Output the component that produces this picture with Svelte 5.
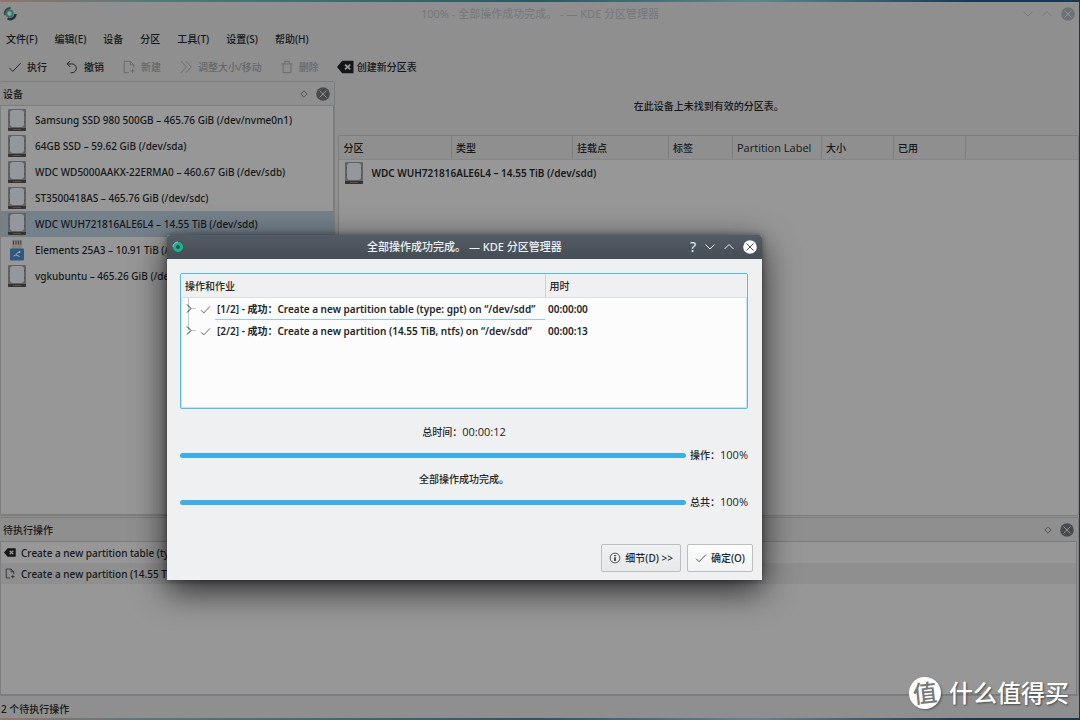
<script>
  const menus = ["文件(F)", "编辑(E)", "设备", "分区", "工具(T)", "设置(S)", "帮助(H)"];

  const devices = [
    { name: "Samsung SSD 980 500GB – 465.76 GiB (/dev/nvme0n1)" },
    { name: "64GB SSD – 59.62 GiB (/dev/sda)" },
    { name: "WDC WD5000AAKX-22ERMA0 – 460.67 GiB (/dev/sdb)" },
    { name: "ST3500418AS – 465.76 GiB (/dev/sdc)" },
    { name: "WDC WUH721816ALE6L4 – 14.55 TiB (/dev/sdd)" },
    { name: "Elements 25A3 – 10.91 TiB (/dev/sde)", usb: true },
    { name: "vgkubuntu – 465.26 GiB (/dev/vgkubuntu)" }
  ];

  const columns = [
    { label: "分区", width: 112 },
    { label: "类型", width: 121 },
    { label: "挂载点", width: 96 },
    { label: "标签", width: 64 },
    { label: "Partition Label", width: 89, latin: true },
    { label: "大小", width: 72 },
    { label: "已用", width: 72 },
    { label: "", width: null }
  ];

  const jobs = [
    { step: "[1/2]", text: "Create a new partition table (type: gpt) on “/dev/sdd”", time: "00:00:00" },
    { step: "[2/2]", text: "Create a new partition (14.55 TiB, ntfs) on “/dev/sdd”", time: "00:00:13" }
  ];

  let selected = $state(4);
  let current = $state(0);
</script>

{#snippet check()}
  <svg class="icon" viewBox="0 0 16 16" aria-hidden="true">
    <path d="M1.5 9 L5.5 13 L14.5 3.5" />
  </svg>
{/snippet}

{#snippet newDoc()}
  <svg class="icon" viewBox="0 0 16 16" aria-hidden="true">
    <path d="M8 14.5 H2.5 V1.5 H9.5 L13.5 5.5 V9 M9.5 1.5 V5.5 H13.5 M12 10 V15 M9.5 12.5 H14.5" />
  </svg>
{/snippet}

{#snippet clearTag()}
  <svg class="icon tag" viewBox="0 0 18 14" aria-hidden="true">
    <path class="solid" d="M0 7 L5.5 0.5 H17.5 V13.5 H5.5 Z" />
    <path class="cross" d="M8.5 4.5 L14 9.5 M14 4.5 L8.5 9.5" />
  </svg>
{/snippet}

{#snippet disk()}
  <svg class="disk" viewBox="0 0 18 22" aria-hidden="true">
    <rect width="18" height="22" rx="1" fill="#606265" />
    <rect x="2" y="1" width="14" height="17" rx="3" fill="#94979b" />
    <path d="M1 6 h1 M16 6 h1 M1 13 h1 M16 13 h1" stroke="#444" />
    <path d="M0 19 H18 V21 a1 1 0 0 1 -1 1 H1 a1 1 0 0 1 -1 -1 Z" fill="#34332f" />
    <path d="M5 20.5 H13" stroke="#5d5040" />
  </svg>
{/snippet}

{#snippet usb()}
  <svg class="disk" viewBox="0 0 18 22" aria-hidden="true">
    <rect x="4" y="1" width="10" height="9" fill="#88857f" />
    <path d="M5.5 1.5 v4 M8 1.5 v4 M10.5 1.5 v4 M12.8 1.5 v4" stroke="#403d36" />
    <rect x="2" y="9.5" width="14" height="12" rx="1" fill="#31597f" />
    <path d="M5.5 17 C9 17 8 13 11.5 13 M8 16 L11.5 17.5" stroke="#9db0c0" fill="none" />
    <circle cx="11.5" cy="13" r="1" fill="#9db0c0" />
  </svg>
{/snippet}

{#snippet close()}
  <svg class="close" viewBox="0 0 14 14" aria-hidden="true">
    <circle cx="7" cy="7" r="6.8" />
    <path d="M3.5 3.5 L10.5 10.5 M10.5 3.5 L3.5 10.5" />
  </svg>
{/snippet}

{#snippet logo()}
  <svg class="logo" viewBox="0 0 14 14" aria-hidden="true">
    <path d="M4.5 11.5 A5.500 5.500 0 0 0 12.500 7" fill="none" stroke="#25313a" stroke-width="2.5" />
    <path d="M2 8 A5.500 5.500 0 0 1 7.500 1" fill="none" stroke="#3a4348" stroke-width="2" />
    <circle cx="6.500" cy="6.500" r="3.200" fill="#8fa39d" stroke="#2f7466" stroke-width="2" />
  </svg>
{/snippet}

{#snippet chevron(d)}
  <svg class="chevron" viewBox="0 0 10 10" aria-hidden="true">
    <path {d} />
  </svg>
{/snippet}

{#snippet dockButtons()}
  <button class="dock-button" aria-label="浮动">
    <svg class="float" viewBox="0 0 8 8" aria-hidden="true"><path d="M4 0.8 L7.2 4 L4 7.2 L0.8 4 Z" /></svg>
  </button>
  <button class="dock-button" aria-label="关闭">{@render close()}</button>
{/snippet}

<div class="desktop">
  <main class="window">
    <header class="titlebar">
      {@render logo()}
      <h1>100% - 全部操作成功完成。 - — KDE 分区管理器</h1>
      <button aria-label="最小化">{@render chevron("M0.5 2.5 L5 7 L9.5 2.5")}</button>
      <button aria-label="最大化">{@render chevron("M0.5 7 L5 2.5 L9.5 7")}</button>
      <button aria-label="关闭">{@render close()}</button>
    </header>

    <nav class="menubar">
      {#each menus as menu}
        <button>{menu}</button>
      {/each}
    </nav>

    <div class="toolbar">
      <button>{@render check()}执行</button>
      <button>
        <svg class="icon" viewBox="0 0 16 16" aria-hidden="true">
          <path d="M6 1 L2.5 4.5 L6 8 M2.500 4.500 H8 A5 5 0 0 1 8 14.500 H6.500" />
        </svg>
        撤销
      </button>
      <button disabled>{@render newDoc()}新建</button>
      <button disabled>
        <svg class="icon" viewBox="0 0 16 16" aria-hidden="true">
          <path d="M2.5 1.5 L8.5 8 L2.5 14.5 M8 1.5 L14 8 L8 14.5" />
        </svg>
        调整大小/移动
      </button>
      <button disabled>
        <svg class="icon" viewBox="0 0 16 16" aria-hidden="true">
          <path d="M1.5 4.5 H14.5 M5.5 4 V1.5 H10.5 V4 M3.5 5 V14.5 H12.5 V5" />
        </svg>
        删除
      </button>
      <button class="wide-icon">{@render clearTag()}创建新分区表</button>
    </div>

    <div class="workspace">
      <section class="dock devices">
        <div class="dock-title">
          <h2>设备</h2>
          {@render dockButtons()}
        </div>
        <ul class="list">
          {#each devices as device, i}
            <li>
              <button class="device" class:selected={selected === i} onclick={() => (selected = i)}>
                {#if device.usb}
                  {@render usb()}
                {:else}
                  {@render disk()}
                {/if}
                {device.name}
              </button>
            </li>
          {/each}
        </ul>
      </section>

      <section class="partitions">
        <p>在此设备上未找到有效的分区表。</p>
        <div class="frame">
          <table>
            <colgroup>
              {#each columns as column}
                <col style:width={column.width ? `${column.width}px` : null} />
              {/each}
            </colgroup>
            <thead>
              <tr>
                {#each columns as column}
                  <th class:latin={column.latin}>{column.label}</th>
                {/each}
              </tr>
            </thead>
            <tbody>
              <tr>
                <td colspan="8">
                  <div class="partition">{@render disk()}WDC WUH721816ALE6L4 – 14.55 TiB (/dev/sdd)</div>
                </td>
              </tr>
            </tbody>
          </table>
        </div>
      </section>
    </div>

    <section class="dock pending">
      <div class="dock-title">
        <h2>待执行操作</h2>
        {@render dockButtons()}
      </div>
      <ul class="list">
        <li>{@render clearTag()}Create a new partition table (type: gpt) on “/dev/sdd”</li>
        <li>{@render newDoc()}Create a new partition (14.55 TiB, ntfs) on “/dev/sdd”</li>
      </ul>
    </section>

    <footer>2 个待执行操作</footer>
  </main>

  <div class="dialog" role="dialog" aria-labelledby="dialog-title">
    <header class="dialog-bar">
      <svg class="logo" viewBox="0 0 14 14" aria-hidden="true">
        <circle cx="7" cy="7" r="3.5" fill="#22564f" stroke="#1fb08f" stroke-width="3" />
        <path d="M2 7 A5 5 0 0 1 7 2" fill="none" stroke="#8fcfc0" stroke-width="1" />
      </svg>
      <h2 id="dialog-title">全部操作成功完成。 — KDE 分区管理器</h2>
      <button class="help" aria-label="帮助">?</button>
      <button aria-label="最小化">{@render chevron("M0.5 2.5 L5 7 L9.5 2.5")}</button>
      <button aria-label="最大化">{@render chevron("M0.5 7 L5 2.5 L9.5 7")}</button>
      <button aria-label="关闭">{@render close()}</button>
    </header>

    <div class="dialog-body">
      <div class="jobs">
        <table>
          <colgroup>
            <col class="job-col" />
            <col />
          </colgroup>
          <thead>
            <tr><th>操作和作业</th><th>用时</th></tr>
          </thead>
          <tbody>
            {#each jobs as job, i}
              <tr>
                <td>
                  <div class="job">
                    <svg class="branch" viewBox="0 0 12 22" aria-hidden="true">
                      <path class="line" d={i === 0 ? "M4.5 0 V22 M8 10.5 H12" : "M4.5 0 V10 M8 10.5 H12"} />
                      <path d="M3 6.5 L7 10.5 L3 14.5" />
                    </svg>
                    {@render check()}
                    <button class:current={current === i} onclick={() => (current = i)}>
                      {job.step} - <span>成功：</span>{job.text}
                    </button>
                  </div>
                </td>
                <td>{job.time}</td>
              </tr>
            {/each}
          </tbody>
        </table>
      </div>

      <p class="status">总时间：<span class="latin">00:00:12</span></p>
      <div class="bar">
        <progress id="op" value="100" max="100"></progress>
        <label for="op">操作：<span class="latin">100%</span></label>
      </div>
      <p class="status">全部操作成功完成。</p>
      <div class="bar">
        <progress id="total" value="100" max="100"></progress>
        <label for="total">总共：<span class="latin">100%</span></label>
      </div>

      <div class="actions">
        <button>
          <svg class="icon" viewBox="0 0 16 16" aria-hidden="true">
            <circle cx="8" cy="8" r="6.5" />
            <path d="M8 7 V12 M8 4 V5.5" stroke-width="2" />
          </svg>
          细节(D) &gt;&gt;
        </button>
        <button class="default">{@render check()}确定(O)</button>
      </div>
    </div>
  </div>

  <div class="watermark"><span class="seal">值</span>什么值得买</div>
</div>

<style>
  :global(body) {
    margin: 0;
  }

  .desktop {
    position: relative;
    box-sizing: border-box;
    min-height: 100vh;
    padding: 2px 1px 2px 0;
    display: flex;
    overflow: hidden;
    background: linear-gradient(90deg, #91766c, #52777c 15%, #2c5763 50%, #648390 70%, #183850 90%);
    font-family: "Noto Sans", "Noto Sans CJK SC", sans-serif;
    font-size: 10px;
    line-height: 16px;
    color: #15181a;
  }

  h1,
  h2,
  p,
  ul {
    margin: 0;
    padding: 0;
    font-size: inherit;
    font-weight: 500;
    list-style: none;
  }

  button {
    display: flex;
    align-items: center;
    padding: 0;
    border: none;
    background: none;
    color: inherit;
    font: inherit;
    white-space: nowrap;
  }

  table {
    width: 100%;
    border-collapse: collapse;
    table-layout: fixed;
  }

  th {
    font-weight: 500;
    text-align: left;
  }

  svg {
    flex: none;
    fill: none;
    stroke: currentColor;
  }

  .latin {
    font-family: "Open Sans", "Noto Sans CJK SC", sans-serif;
    font-size: 11px;
    font-weight: 400;
  }

  .icon {
    width: 14px;
    height: 14px;
  }

  .tag {
    width: 17px;
  }

  .tag .solid {
    fill: #131516;
    stroke: none;
  }

  .tag .cross {
    stroke: #999;
    stroke-width: 2;
  }

  .disk {
    width: 18px;
    height: 22px;
    stroke: none;
  }

  .close {
    width: 14px;
    height: 14px;
  }

  .close circle {
    fill: #484b4e;
    stroke: none;
  }

  .close path {
    stroke: #919293;
    stroke-width: 1;
  }

  .logo {
    width: 14px;
    height: 14px;
  }

  .chevron {
    width: 10px;
    height: 10px;
  }

  .window {
    flex: 1;
    min-width: 0;
    display: flex;
    flex-direction: column;
    background: #8f8f90;
  }

  .titlebar {
    display: flex;
    align-items: center;
    gap: 9px;
    height: 24px;
    padding: 0 4px 0 3px;
    color: #73777a;
  }

  .titlebar h1 {
    flex: 1;
    padding-left: 40px;
    font-size: 11px;
    font-weight: 400;
    text-align: center;
  }

  .titlebar .close circle {
    fill: #6e7174;
  }

  .menubar {
    display: flex;
    gap: 17px;
    padding: 5px 6px;
    font-weight: 500;
  }

  .toolbar {
    display: flex;
    align-items: center;
    gap: 18px;
    height: 29px;
    padding: 0 8px;
    font-weight: 500;
  }

  .toolbar button {
    gap: 5px;
  }

  .toolbar button:disabled {
    color: #656869;
  }

  .toolbar .wide-icon {
    gap: 3px;
  }

  .workspace {
    flex: 1;
    display: flex;
    gap: 3px;
    min-height: 0;
  }

  .dock {
    display: flex;
    flex-direction: column;
    border: 1px solid #7c7d7e;
    border-left: none;
    border-radius: 2px;
    font-weight: 500;
  }

  .dock-title {
    display: flex;
    align-items: center;
    gap: 8px;
    height: 23px;
    padding: 0 4px 0 3px;
  }

  .dock-title h2 {
    flex: 1;
  }

  .float {
    width: 8px;
    height: 8px;
    stroke: #505356;
  }

  .list {
    flex: 1;
    border: 1px solid #7c7d7e;
    background: #979797;
    font-weight: 500;
  }

  .devices {
    flex: none;
    width: 31%;
  }

  .devices .list {
    padding-top: 1px;
  }

  .device {
    gap: 9px;
    width: 100%;
    height: 26px;
    padding: 0 7px;
    overflow: hidden;
  }

  .device.selected {
    background: #74818b;
  }

  .partitions {
    flex: 1;
    min-width: 0;
    display: flex;
    flex-direction: column;
    font-weight: 500;
  }

  .partitions p {
    padding: 17px 0 21px;
    text-align: center;
  }

  .frame {
    flex: 1;
    border: 1px solid #7c7d7e;
    border-radius: 2px;
    background: #979797;
  }

  .frame th {
    height: 23px;
    padding: 0 4px;
    border-right: 1px solid #7c7d7e;
    border-bottom: 1px solid #858687;
    background: #8f8f90;
    white-space: nowrap;
  }

  .frame th:last-child {
    border-right: none;
  }

  .frame td {
    padding: 0;
  }

  .partition {
    display: flex;
    align-items: center;
    gap: 8px;
    height: 26px;
    padding: 0 6px;
    font-weight: 600;
  }

  .pending {
    margin-top: 1px;
  }

  .pending .list {
    min-height: 152px;
    margin-right: 1px;
  }

  .pending li {
    display: flex;
    align-items: center;
    gap: 5px;
    height: 21px;
    padding: 0 3px;
  }

  .pending li:nth-child(2) {
    background: #8f8f90;
  }

  .pending .icon {
    width: 12px;
    height: 11px;
  }

  footer {
    padding: 5px 1px 1px;
    font-weight: 500;
  }

  .dialog {
    position: absolute;
    top: 235px;
    left: 167px;
    width: 595px;
    border-radius: 3px 3px 0 0;
    background: #eff0f1;
    box-shadow: 0 10px 34px rgba(0, 0, 0, 0.75), 0 0 6px rgba(0, 0, 0, 0.4);
    color: #232629;
  }

  .dialog-bar {
    display: flex;
    align-items: center;
    gap: 9px;
    height: 24px;
    padding: 0 5px 0 4px;
    border-radius: 3px 3px 0 0;
    background: linear-gradient(#535c66, #454c54);
    color: #eff0f1;
  }

  .dialog-bar h2 {
    flex: 1;
    padding-left: 54px;
    font-size: 11px;
    text-align: center;
  }

  .dialog-bar .close circle {
    fill: #fcfcfc;
  }

  .dialog-bar .close path {
    stroke: #454c54;
  }

  .dialog-bar .help {
    font-size: 14px;
    font-weight: 400;
  }

  .dialog-body {
    padding: 14px 14px 8px 13px;
  }

  .jobs {
    height: 134px;
    border: 1px solid #5bb8ea;
    border-radius: 2px;
    background: #fcfcfc;
    box-shadow: inset 0 0 0 1px #c3e4f5;
    font-weight: 600;
  }

  .job-col {
    width: 364px;
  }

  .jobs th {
    height: 23px;
    padding: 0 4px;
    border-right: 1px solid #d0d2d3;
    border-bottom: 1px solid #dcddde;
    background: #eff0f1;
  }

  .jobs th:last-child {
    border-right: none;
  }

  .jobs td {
    height: 22px;
    padding: 0 3px;
  }

  .job {
    display: flex;
    align-items: center;
    gap: 4px;
  }

  .job .icon {
    width: 11px;
    height: 11px;
  }

  .job button {
    flex: 1;
    height: 22px;
    margin-right: -3px;
    padding: 0 2px;
    border-bottom: 1px solid transparent;
    white-space: pre;
  }

  .job button.current {
    border-bottom-color: #93cee9;
  }

  .branch {
    width: 12px;
    height: 22px;
  }

  .branch .line {
    stroke: #c4c6c8;
  }

  .status {
    padding-top: 15px;
    text-align: center;
  }

  .bar {
    display: flex;
    align-items: center;
    gap: 4px;
    margin-top: 7px;
  }

  .bar + .status {
    padding-top: 8px;
  }

  .bar label {
    font-weight: 500;
  }

  progress {
    flex: 1;
    height: 5px;
    border: none;
    border-radius: 3px;
    overflow: hidden;
    appearance: none;
    background: #c4c7c9;
  }

  progress::-webkit-progress-bar {
    background: #c4c7c9;
  }

  progress::-webkit-progress-value {
    background: #3daee9;
  }

  .actions {
    display: flex;
    justify-content: flex-end;
    gap: 6px;
    margin: 34px -5px 0 0;
  }

  .actions button {
    gap: 4px;
    height: 28px;
    padding: 0 7px;
    border: 1px solid #bcbebf;
    border-radius: 2px;
    background: linear-gradient(#f0f1f2, #e8e9ea);
    font-weight: 500;
  }

  .actions button.default {
    background: linear-gradient(#fcfcfc, #f1f2f3);
  }

  .actions .icon {
    width: 12px;
    height: 12px;
  }

  .watermark {
    position: absolute;
    right: 11px;
    bottom: 11px;
    display: flex;
    align-items: center;
    gap: 8px;
    color: #fff;
    font-size: 24px;
    font-weight: 500;
    line-height: 32px;
    text-shadow: 1px 1px 2px rgba(0, 0, 0, 0.5);
  }

  .seal {
    width: 32px;
    height: 32px;
    border-radius: 50%;
    background: #fff;
    box-shadow: 1px 1px 2px rgba(0, 0, 0, 0.4);
    color: #77797b;
    text-align: center;
    text-shadow: none;
    transform: rotate(-6deg);
  }
</style>
